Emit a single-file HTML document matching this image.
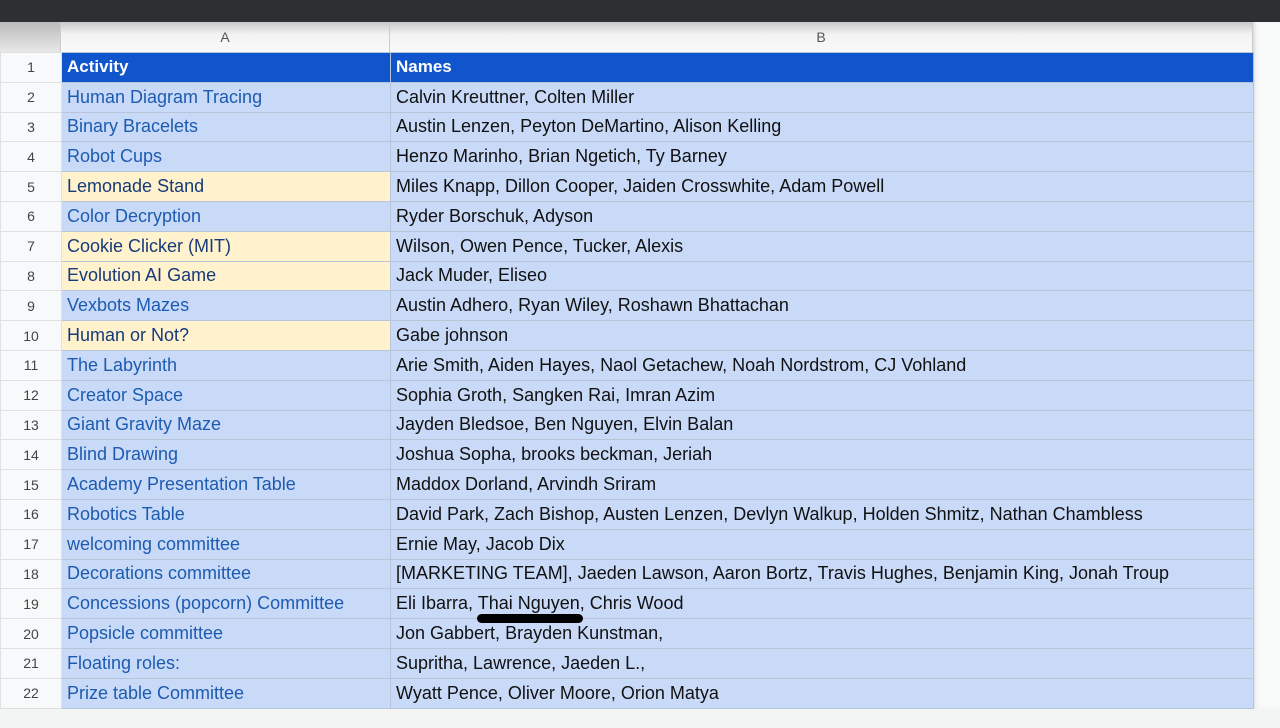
<!DOCTYPE html><html><head><style>
body{margin:0;width:1280px;height:728px;overflow:hidden;background:#f3f4f4;font-family:"Liberation Sans",Arial,sans-serif;position:relative}
.top{position:absolute;left:0;top:0;width:1280px;height:22px;background:#2e2f32}
.hdr{position:absolute;top:22px;height:30px;background:linear-gradient(#c8c8c8,#f2f2f2 40%,#fafafa);color:#555;font-size:14px;text-align:center;line-height:30px;box-sizing:border-box;border-right:1px solid #ccc}
table{position:absolute;left:0;top:52px;border-collapse:collapse;table-layout:fixed}
td{height:29.8px;padding:0 0 0 5px;font-size:18px;border:1px solid #b8c4d8;box-sizing:border-box;white-space:nowrap;overflow:hidden}
td.n{width:61px;background:#f8f9fa;color:#444;text-align:center;font-size:14px;padding:0;border-color:#e0e0e0}
td.a{width:329px;background:#c9daf8;color:#1d5bb0}
td.b{width:863px;background:#c9daf8;color:#111}
td.y{background:#fff2cc;color:#173a7a}
tr.h td.a,tr.h td.b{background:#1155cc;color:#fff;font-weight:bold;font-size:17px}
.right{position:absolute;left:1253px;top:22px;width:27px;height:686px;background:#f8f9f9;box-shadow:inset 4px 0 4px -3px #ccc}
</style></head><body>
<div class="top"></div>
<div class="hdr" style="left:0;width:61px;background:linear-gradient(#bbb,#e8e8e8)"></div>
<div class="hdr" style="left:61px;width:329px">A</div>
<div class="hdr" style="left:390px;width:863px">B</div>
<div class="right"></div>
<table>
<tr class="h"><td class="n">1</td><td class="a">Activity</td><td class="b">Names</td></tr>
<tr><td class="n">2</td><td class="a">Human Diagram Tracing</td><td class="b">Calvin Kreuttner, Colten Miller</td></tr>
<tr><td class="n">3</td><td class="a">Binary Bracelets</td><td class="b">Austin Lenzen, Peyton DeMartino, Alison Kelling</td></tr>
<tr><td class="n">4</td><td class="a">Robot Cups</td><td class="b">Henzo Marinho, Brian Ngetich, Ty Barney</td></tr>
<tr><td class="n">5</td><td class="a y">Lemonade Stand</td><td class="b">Miles Knapp, Dillon Cooper, Jaiden Crosswhite, Adam Powell</td></tr>
<tr><td class="n">6</td><td class="a">Color Decryption</td><td class="b">Ryder Borschuk, Adyson</td></tr>
<tr><td class="n">7</td><td class="a y">Cookie Clicker (MIT)</td><td class="b">Wilson, Owen Pence, Tucker, Alexis</td></tr>
<tr><td class="n">8</td><td class="a y">Evolution AI Game</td><td class="b">Jack Muder, Eliseo</td></tr>
<tr><td class="n">9</td><td class="a">Vexbots Mazes</td><td class="b">Austin Adhero, Ryan Wiley, Roshawn Bhattachan</td></tr>
<tr><td class="n">10</td><td class="a y">Human or Not?</td><td class="b">Gabe johnson</td></tr>
<tr><td class="n">11</td><td class="a">The Labyrinth</td><td class="b">Arie Smith, Aiden Hayes, Naol Getachew, Noah Nordstrom, CJ Vohland</td></tr>
<tr><td class="n">12</td><td class="a">Creator Space</td><td class="b">Sophia Groth, Sangken Rai, Imran Azim</td></tr>
<tr><td class="n">13</td><td class="a">Giant Gravity Maze</td><td class="b">Jayden Bledsoe, Ben Nguyen, Elvin Balan</td></tr>
<tr><td class="n">14</td><td class="a">Blind Drawing</td><td class="b">Joshua Sopha, brooks beckman, Jeriah</td></tr>
<tr><td class="n">15</td><td class="a">Academy Presentation Table</td><td class="b">Maddox Dorland, Arvindh Sriram</td></tr>
<tr><td class="n">16</td><td class="a">Robotics Table</td><td class="b">David Park, Zach Bishop, Austen Lenzen, Devlyn Walkup, Holden Shmitz, Nathan Chambless</td></tr>
<tr><td class="n">17</td><td class="a">welcoming committee</td><td class="b">Ernie May, Jacob Dix</td></tr>
<tr><td class="n">18</td><td class="a">Decorations committee</td><td class="b">[MARKETING TEAM], Jaeden Lawson, Aaron Bortz, Travis Hughes, Benjamin King, Jonah Troup</td></tr>
<tr><td class="n">19</td><td class="a">Concessions (popcorn) Committee</td><td class="b">Eli Ibarra, Thai Nguyen, Chris Wood</td></tr>
<tr><td class="n">20</td><td class="a">Popsicle committee</td><td class="b">Jon Gabbert, Brayden Kunstman,</td></tr>
<tr><td class="n">21</td><td class="a">Floating roles:</td><td class="b">Supritha, Lawrence, Jaeden L.,</td></tr>
<tr><td class="n">22</td><td class="a">Prize table Committee</td><td class="b">Wyatt Pence, Oliver Moore, Orion Matya</td></tr>
</table>
<div style="position:absolute;left:477px;top:614px;width:106px;height:9px;background:#000;border-radius:5px"></div>
</body></html>
